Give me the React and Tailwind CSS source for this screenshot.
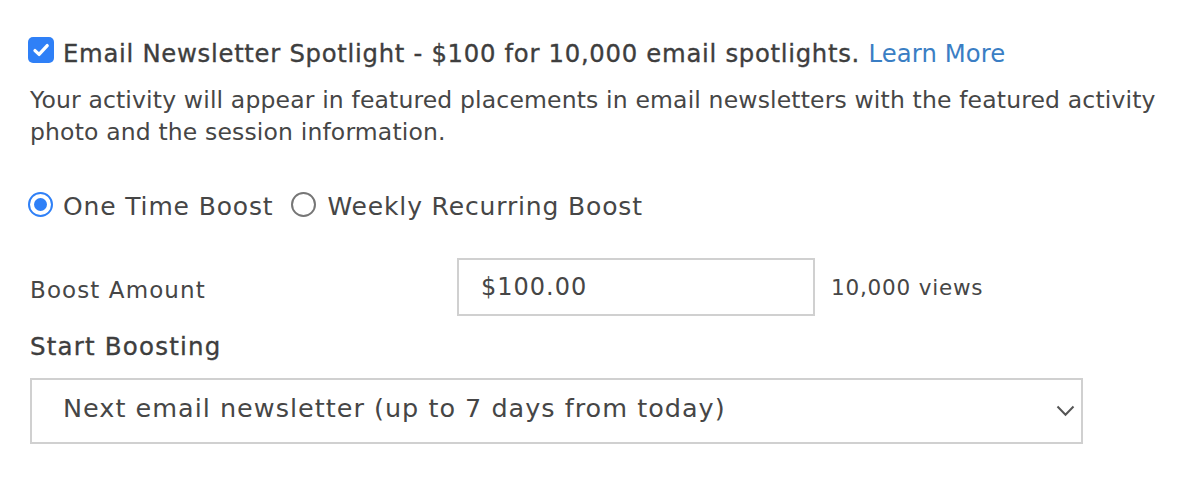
import React from "react";

export default function App() {
  return (
    <div className="w-[1184px] h-[492px] bg-white text-[#464646] [font-family:'DejaVu_Sans',sans-serif]">
      <div className="pl-[28px] pt-[37px]">
        <div className="flex items-start">
          <div className="w-[26px] h-[26px] rounded-[5px] bg-[#2f80f7] shrink-0">
            <svg width="26" height="26" viewBox="0 0 26 26">
              <path d="M7 13.6 L11.1 17.4 L19.2 8.6" stroke="white" strokeWidth="3.3" fill="none" strokeLinecap="round" strokeLinejoin="round" />
            </svg>
          </div>
          <span className="mt-[3px] ml-[9px] text-[24.3px] leading-[28px] tracking-[0.72px] whitespace-nowrap text-[#3e3e3e] [-webkit-text-stroke:0.35px_#3e3e3e]">
            Email Newsletter Spotlight - $100 for 10,000 email spotlights.{" "}
            <span className="text-[#3a7ec4] tracking-[0.1px] [-webkit-text-stroke:0px]">Learn More</span>
          </span>
        </div>
        <p className="mt-[16px] ml-[2px] text-[23.5px] leading-[32px] tracking-[0.15px] w-[1150px]">
          Your activity will appear in featured placements in email newsletters with the featured activity photo and the session information.
        </p>
        <div className="mt-[44px] flex items-start h-[30px]">
          <div className="w-[25px] h-[25px] rounded-full border-[2.5px] border-[#2f80f7] flex items-center justify-center shrink-0">
            <div className="w-[13px] h-[13px] rounded-full bg-[#2f80f7]" />
          </div>
          <span className="ml-[10px] text-[25px] leading-[30px] tracking-[0.85px] whitespace-nowrap">One Time Boost</span>
          <div className="ml-[18px] w-[25px] h-[25px] rounded-full border-[2px] border-[#767676] shrink-0" />
          <span className="ml-[11px] text-[25px] leading-[30px] tracking-[0.85px] whitespace-nowrap">Weekly Recurring Boost</span>
        </div>
        <div className="mt-[36px] flex items-start">
          <div className="w-[429px] pl-[2px] mt-[18px] text-[23px] leading-[28px] tracking-[1.1px] whitespace-nowrap">Boost Amount</div>
          <div className="w-[358px] h-[58px] border-[2px] border-[#d0d0d0] flex items-center pl-[22px] text-[24px] tracking-[1px]">
            $100.00
          </div>
          <div className="ml-[16px] h-[58px] flex items-center pt-[3px] text-[21.5px] tracking-[0.8px] whitespace-nowrap">10,000 views</div>
        </div>
        <div className="mt-[17px] ml-[2px] text-[24.5px] leading-[28px] tracking-[1.2px] text-[#3e3e3e] [-webkit-text-stroke:0.35px_#3e3e3e]">Start Boosting</div>
        <div className="mt-[17px] ml-[2px] w-[1053px] h-[66px] border-[2px] border-[#d0d0d0] flex items-center justify-between pl-[31px] pr-[6px]">
          <span className="mb-[6px] text-[25.5px] leading-[30px] tracking-[1px] whitespace-nowrap">Next email newsletter (up to 7 days from today)</span>
          <svg width="19" height="12" viewBox="0 0 19 12">
            <path d="M1.5 1.5 L9.5 9.8 L17.5 1.5" stroke="#555" strokeWidth="2" fill="none" />
          </svg>
        </div>
      </div>
    </div>
  );
}
